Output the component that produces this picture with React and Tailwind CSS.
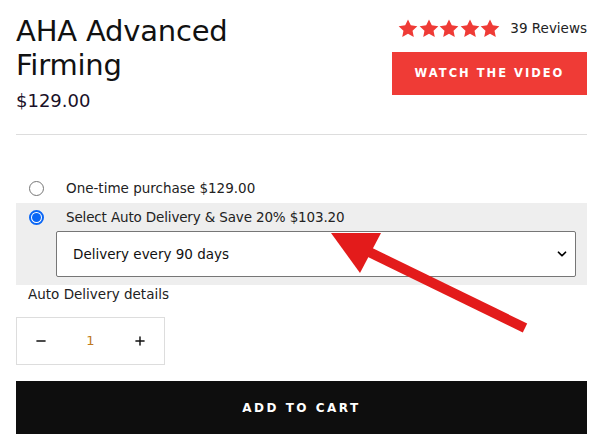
import { Minus, Plus, ChevronDown } from 'lucide-react';

const Star = () => (
  <svg width="20" height="19" viewBox="0 0 24 23" className="text-[#ef3b36]" fill="currentColor">
    <path d="M12 0.5l3.4 7.2 7.9 1-5.8 5.4 1.5 7.8L12 18l-7 3.9 1.5-7.8L0.7 8.7l7.9-1z" />
  </svg>
);

const App = () => {
  return (
    <div className="w-[603px] h-[446px] bg-white overflow-hidden relative" style={{ fontFamily: '"DejaVu Sans", sans-serif' }}>
      <div className="px-4 pt-[14px]">
        {/* Header */}
        <div className="flex justify-between">
          <div>
            <h1 className="text-[29px] leading-[34px] text-[#111] tracking-[-0.2px]">
              AHA Advanced
              <br />
              Firming
            </h1>
            <div className="mt-[7px] text-[18px] leading-[24px] text-[#1a1028]">$129.00</div>
          </div>
          <div className="flex flex-col items-end pt-[2px]">
            <div className="flex items-center gap-[10px] h-[24px]">
              <div className="flex gap-[0.5px]">
                <Star />
                <Star />
                <Star />
                <Star />
                <Star />
              </div>
              <span className="text-[13.5px] text-[#222]">39 Reviews</span>
            </div>
            <button className="mt-[12px] w-[195px] h-[43px] bg-[#ef3b36] text-white text-[11.5px] font-bold tracking-[2px]">
              WATCH THE VIDEO
            </button>
          </div>
        </div>

        <div className="mt-[21px] h-px bg-[#dddddd]" />

        {/* Purchase options */}
        <div className="mt-[45px]">
          <label className="flex items-center h-[16px] pl-[13px]">
            <span className="w-[15px] h-[15px] rounded-full border border-[#767676] bg-white" />
            <span className="ml-[22px] text-[13.5px] text-[#222]">One-time purchase $129.00</span>
          </label>
          <div className="mt-[7px] bg-[#eeeeee] pt-[6px] pb-[8px]">
            <label className="flex items-center h-[16px] pl-[13px]">
              <span className="w-[15px] h-[15px] rounded-full border-2 border-[#0a66f5] bg-white flex items-center justify-center">
                <span className="w-[9px] h-[9px] rounded-full bg-[#0a66f5]" />
              </span>
              <span className="ml-[22px] text-[13.5px] text-[#222] tracking-[-0.15px]">Select Auto Delivery &amp; Save 20% $103.20</span>
            </label>
            <div className="mt-[6px] ml-[40px] mr-[11px] h-[46px] bg-white border border-[#767676] rounded-[2px] flex items-center justify-between pl-[16px] pr-[6px]">
              <span className="text-[13.5px] text-[#111]">Delivery every 90 days</span>
              <ChevronDown size={14} strokeWidth={3} className="text-black" />
            </div>
          </div>
          <div className="pl-[12px] text-[13.5px] text-[#222] leading-[18px]">Auto Delivery details</div>
        </div>

        {/* Quantity */}
        <div className="mt-[14px] w-[149px] h-[48px] border border-[#dddddd] flex items-center justify-between px-[17px]">
          <Minus size={14} strokeWidth={2.5} className="text-[#111]" />
          <span className="text-[13px] text-[#c07a20]">1</span>
          <Plus size={14} strokeWidth={2.5} className="text-[#111]" />
        </div>

        {/* Add to cart */}
        <button className="mt-[16px] w-full h-[53px] bg-[#0e0e0e] text-white text-[12px] font-bold tracking-[2.5px]">
          ADD TO CART
        </button>
      </div>

      {/* Red annotation arrow */}
      <svg className="absolute left-0 top-0 pointer-events-none" width="603" height="446">
        <line x1="525" y1="328" x2="365" y2="250" stroke="#e31b1b" strokeWidth="10" />
        <polygon points="331,233 381,233 360,273" fill="#e31b1b" />
      </svg>
    </div>
  );
};

export default App;
